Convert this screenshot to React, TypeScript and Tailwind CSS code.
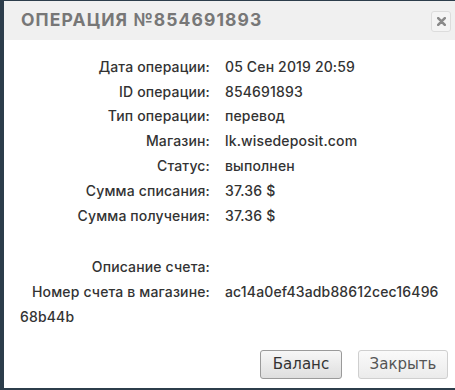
import React from 'react';

const rows: [string, string][] = [
  ['Дата операции:', '05 Сен 2019 20:59'],
  ['ID операции:', '854691893'],
  ['Тип операции:', 'перевод'],
  ['Магазин:', 'lk.wisedeposit.com'],
  ['Статус:', 'выполнен'],
  ['Сумма списания:', '37.36 $'],
  ['Сумма получения:', '37.36 $'],
];

const Row = ({ label, value }: { label: string; value: string }) => (
  <div className="flex h-[24.8px] items-center">
    <span className="w-[190px] shrink-0 text-right">{label}</span>
    <span className="ml-[15px]">{value}</span>
  </div>
);

export default function App() {
  return (
    <div className="h-[390px] w-[455px] overflow-hidden bg-[#2c3d4b] pl-[4px] pt-[1px]">
      <div className="flex h-[387px] flex-col bg-white">
        <div className="flex h-[39px] items-center justify-between bg-[#f0f0f0] pl-[17px] pr-[4px]">
          <h2
            className="text-[17.5px] font-bold tracking-[1.1px] text-[#777]"
            style={{ fontFamily: 'Inter, "Noto Sans", sans-serif' }}
          >
            ОПЕРАЦИЯ №854691893
          </h2>
          <button className="mt-[2px] flex h-[21px] w-[20px] items-center justify-center rounded-[3px] border border-[#dcdcdc] bg-[#f4f4f4]">
            <svg width="9" height="9" viewBox="0 0 9 9">
              <path d="M1.2 1.2 L7.8 7.8 M7.8 1.2 L1.2 7.8" stroke="#8a8a8a" strokeWidth="2.6" strokeLinecap="round" />
            </svg>
          </button>
        </div>

        <div
          className="px-[16px] pt-[14px] text-[14px] font-medium tracking-[0.15px] text-[#333]"
          style={{ fontFamily: 'Inter, "Noto Sans", sans-serif' }}
        >
          {rows.map(([l, v]) => (
            <Row key={l} label={l} value={v} />
          ))}
          <div className="h-[27px]" />
          <Row label="Описание счета:" value="" />
          <p className="leading-[25px]">
            <span className="inline-block w-[190px] text-right">Номер счета в магазине:</span>
            <span className="ml-[15px]">ac14a0ef43adb88612cec16496</span>
            <br />
            68b44b
          </p>
        </div>

        <div
          className="mt-auto flex justify-end gap-[16px] pb-[9px] pr-[7px] text-[15px]"
          style={{ fontFamily: '"DejaVu Sans", Verdana, sans-serif' }}
        >
          <button className="h-[29px] w-[82px] rounded-[3px] border border-[#9a9a9a] bg-gradient-to-b from-[#f7f7f7] to-[#dedede] text-[#333]">
            Баланс
          </button>
          <button className="h-[29px] w-[90px] rounded-[3px] border border-[#cfcfcf] bg-gradient-to-b from-[#fafafa] to-[#ebebeb] text-[#555]">
            Закрыть
          </button>
        </div>
      </div>
    </div>
  );
}
